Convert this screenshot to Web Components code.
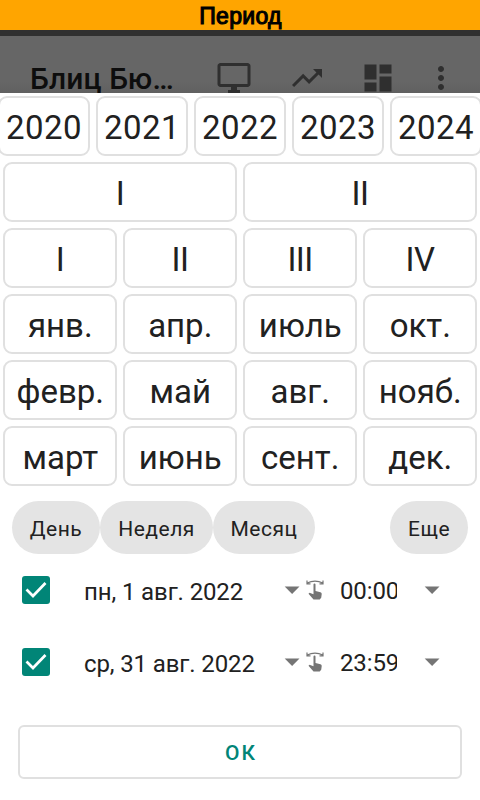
<!DOCTYPE html>
<html lang="ru"><head><meta charset="utf-8"><title>Период</title>
<style>
html,body{margin:0;height:100%}
body{font-family:Roboto,"Noto Sans",sans-serif;color:#212121;background:#fff;overflow:hidden}
</style></head><body>
<period-screen></period-screen>
<script>
const define=(name,html)=>{
  const t=document.createElement('template');t.innerHTML=html;
  customElements.define(name,class extends HTMLElement{
    constructor(){super();this.attachShadow({mode:'open'}).append(t.content.cloneNode(true));}
  });
};
define('title-banner',`<style>
:host{display:block;height:30px;background:#ffa500;border-bottom:6px solid #303030;text-align:center;
font:23px/32px "Liberation Sans",sans-serif;letter-spacing:.3px;padding-left:1px;color:#000;-webkit-text-stroke:1.1px #000}
</style><slot></slot>`);
define('app-toolbar',`<style>
:host{display:flex;height:57px;overflow:hidden;background:linear-gradient(#666 80%,#606060);color:#2f2f2f;box-sizing:border-box;padding:24px 21px 0 30px;align-items:flex-start}
.t{font:500 30px/33px Roboto,sans-serif;letter-spacing:.1px;padding-top:1.500px;color:#0d0d0d;width:186px;height:33px}
svg{flex:none;width:36px;height:36px;fill:currentColor}
.a{margin-left:0}.b{margin-left:36.500px}.c{margin-left:35.500px}.d{margin-left:27px}
</style><div class="t"><slot></slot></div>
<svg class="a" viewBox="0 0 24 24"><path d="M21 2H3c-1.1 0-2 .9-2 2v12c0 1.1.9 2 2 2h7v2H8v2h8v-2h-2v-2h7c1.1 0 2-.9 2-2V4c0-1.100-.9-2-2-2zm0 14H3V4h18v12z"/></svg>
<svg class="b" viewBox="0 0 24 24"><path d="M16 6l2.290 2.290-4.880 4.880-4-4L2 16.590 3.410 18l6-6 4 4 6.300-6.290L22 12V6z"/></svg>
<svg class="c" viewBox="0 0 24 24"><path d="M3 13h8V3H3v10zm0 8h8v-6H3v6zm10 0h8V11h-8v10zm0-18v6h8V3h-8z"/></svg>
<svg class="d" viewBox="0 0 24 24"><path d="M12 8c1.100 0 2-.9 2-2s-.9-2-2-2-2 .9-2 2 .9 2 2 2zm0 2c-1.100 0-2 .9-2 2s.9 2 2 2 2-.9 2-2-.9-2-2-2zm0 6c-1.100 0-2 .9-2 2s.9 2 2 2 2-.9 2-2-.9-2-2-2z"/></svg>`);
define('period-button',`<style>
:host{display:block;box-sizing:border-box;height:60px;border:2px solid #e0e0e0;border-radius:9px;text-align:center;
font-size:33px;line-height:60px;padding-left:var(--nudge,.5px);letter-spacing:var(--track,0);white-space:nowrap;flex:1;min-width:0}
</style><slot></slot>`);
define('button-row',`<style>
:host{display:flex;gap:6px;padding:0 3px;margin-bottom:6px}
:host([years]){padding:0;margin-left:-2px;margin-right:-2px;--track:.45px;--nudge:0px}
:host([roman]){--track:-.6px;--nudge:0px}
</style><slot></slot>`);
define('range-chip',`<style>
:host{display:block;box-sizing:border-box;height:53px;border-radius:27px;background:#e4e4e4;text-align:center;font-size:21px;line-height:56px;letter-spacing:.5px;width:var(--w)}
</style><slot></slot>`);
define('chip-row',`<style>
:host{display:flex;padding:9px 12px 0;height:53px}
::slotted(:last-child){margin-left:auto}
</style><slot></slot>`);
define('date-row',`<style>
:host{display:flex;height:72px;align-items:center;padding-left:22px;font-size:24px;letter-spacing:-.12px}
svg{flex:none;display:block}
.date{width:200px;margin-left:34px;line-height:30px;padding-top:3px;white-space:nowrap}
.arr{fill:#757575}
.hand{margin:0 0 1px 6px;fill:#757575}
.time{width:56.500px;overflow:hidden;margin-left:16px;line-height:30px;padding-top:1px;white-space:nowrap}
.last{margin-left:27.500px}
</style>
<svg width="28" height="28" viewBox="0 0 28 28"><rect width="28" height="28" rx="3" fill="#018577"/><path d="M4.500 13.500 11 20 23.500 7" fill="none" stroke="#fff" stroke-width="2.700"/></svg>
<div class="date"><slot name="date"></slot></div>
<svg class="arr" width="16" height="8" viewBox="0 0 16 8"><path d="M.7.500h14.800L8.100 8z"/></svg>
<svg class="hand" width="18" height="20" viewBox="0 0 18 20"><path d="M7.500 4.500q0-1 1-1t1 1v6.500l5 1.200q1.500.5 1.200 2l-.5 3.500-1.500 1.800H7.500L2.500 13.800l1-1 4 1.500z"/><path d="M1.200 3Q9-.8 16.800 3M1 .5v3.300h3.500M17 .5v3.300h-3.500" fill="none" stroke="#757575" stroke-width="1.200"/></svg>
<div class="time"><slot name="time"></slot></div>
<svg class="arr last" width="16" height="8" viewBox="0 0 16 8"><path d="M.7.500h14.800L8.100 8z"/></svg>`);
define('ok-button',`<style>
:host{display:block;box-sizing:border-box;margin:27px 18px 0;height:54px;border:2px solid #e0e0e0;border-radius:6px;text-align:center;color:#018577;font-size:21px;font-weight:500;line-height:52px;letter-spacing:1.9px;padding-left:2px}
</style><slot></slot>`);
define('period-screen',`<style>
:host{display:block;width:480px;height:800px;overflow:hidden}
.grid{padding-top:3px}
</style>
<title-banner>Период</title-banner><app-toolbar>Блиц Бю…</app-toolbar>
<div class="grid">
${[['2020','2021','2022','2023','2024'],['I','II'],['I','II','III','IV'],['янв.','апр.','июль','окт.'],['февр.','май','авг.','нояб.'],['март','июнь','сент.','дек.']].map((r,i)=>`<button-row${i===0?' years':i<3?' roman':''}>${r.map(x=>`<period-button>${x}</period-button>`).join('')}</button-row>`).join('')}
</div>
<chip-row><range-chip style="--w:88px">День</range-chip><range-chip style="--w:113px">Неделя</range-chip><range-chip style="--w:102px">Месяц</range-chip><range-chip style="--w:78px">Еще</range-chip></chip-row>
<date-row><span slot="date">пн, 1 авг. 2022</span><span slot="time">00:00</span></date-row>
<date-row><span slot="date">ср, 31 авг. 2022</span><span slot="time">23:59</span></date-row>
<ok-button>ОК</ok-button>`);
</script></body></html>
